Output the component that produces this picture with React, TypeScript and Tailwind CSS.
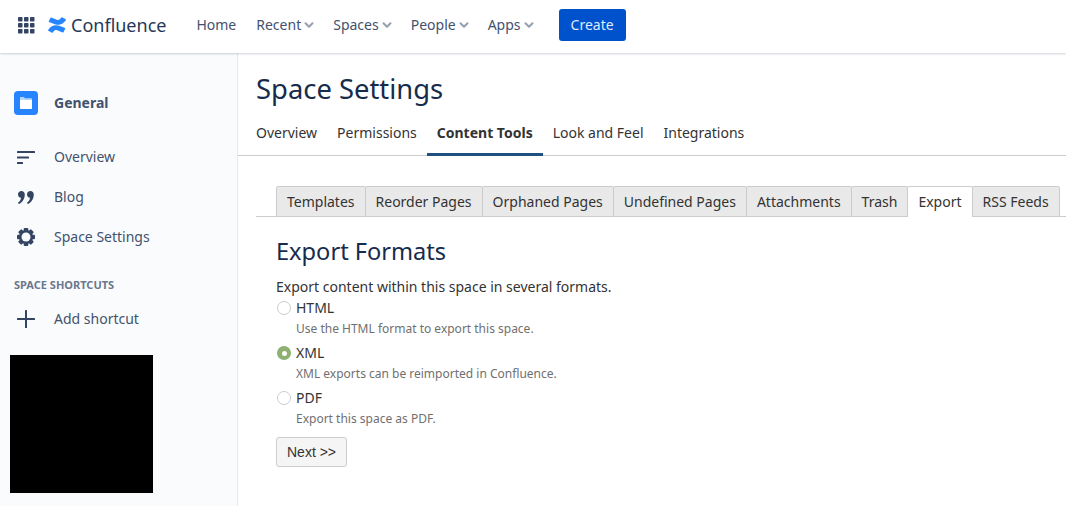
import { ChevronDown } from "lucide-react";

const NAV_ITEMS = [
  { label: "Home", menu: false },
  { label: "Recent", menu: true },
  { label: "Spaces", menu: true },
  { label: "People", menu: true },
  { label: "Apps", menu: true },
];

const SPACE_TABS = ["Overview", "Permissions", "Content Tools", "Look and Feel", "Integrations"];

const TOOL_TABS = [
  "Templates",
  "Reorder Pages",
  "Orphaned Pages",
  "Undefined Pages",
  "Attachments",
  "Trash",
  "Export",
  "RSS Feeds",
];

const FORMATS = [
  { name: "HTML", hint: "Use the HTML format to export this space.", checked: false },
  { name: "XML", hint: "XML exports can be reimported in Confluence.", checked: true },
  { name: "PDF", hint: "Export this space as PDF.", checked: false },
];

function GridIcon() {
  return (
    <svg width="17" height="17" viewBox="0 0 17 17" fill="#344563">
      {[0, 6, 12].map((y) =>
        [0, 6, 12].map((x) => <rect key={`${x}-${y}`} x={x} y={y} width="4.5" height="4.5" rx="0.8" />),
      )}
    </svg>
  );
}

// squashed a little: the mark in the header is wider than it is tall
function ConfluenceMark() {
  return (
    <svg width="18" height="16" viewBox="0 0 24 24" preserveAspectRatio="none" fill="#2684ff">
      <path d="M.87 18.257c-.248.382-.53.875-.763 1.245a.764.764 0 0 0 .255 1.04l4.965 3.054a.764.764 0 0 0 1.058-.26c.199-.332.454-.763.733-1.221 1.967-3.247 3.945-2.853 7.508-1.146l4.957 2.337a.764.764 0 0 0 1.028-.382l2.364-5.346a.764.764 0 0 0-.382-1 599.851 599.851 0 0 1-4.965-2.361C10.911 10.97 5.224 11.185.87 18.257zM23.131 5.743c.249-.405.531-.875.764-1.25a.764.764 0 0 0-.256-1.04L18.675.4a.764.764 0 0 0-1.058.26c-.195.335-.451.763-.734 1.225-1.966 3.246-3.945 2.85-7.508 1.146L4.437.7a.764.764 0 0 0-1.027.382L1.046 6.43a.764.764 0 0 0 .382 1c1.039.49 3.105 1.467 4.965 2.361 6.698 3.246 12.392 3.029 16.738-4.048z" />
    </svg>
  );
}

function FolderBadge() {
  return (
    <div className="flex h-6 w-6 items-center justify-center rounded-[4px] bg-[#2684ff]">
      <svg width="12" height="12" viewBox="0 0 12 12">
        <path d="M0 1C0 .4.400 0 1 0h3l1 1.200h6c.6 0 1 .4 1 1V3H0z" fill="#b3d4ff" />
        <path d="M0 3h12v8c0 .6-.4 1-1 1H1c-.6 0-1-.4-1-1z" fill="#ffffff" />
      </svg>
    </div>
  );
}

function OverviewIcon() {
  return (
    <svg width="18" height="13" viewBox="0 0 18 13" fill="#344563">
      <rect x="0" y="0" width="18" height="2" rx="0.5" />
      <rect x="0" y="5.500" width="12" height="2" rx="0.5" />
      <rect x="0" y="11" width="6" height="2" rx="0.5" />
    </svg>
  );
}

function QuoteIcon() {
  return (
    <svg width="16" height="13" viewBox="0 0 16 13" fill="#344563">
      <path d="M3.400 0C5.300 0 6.800 1.400 6.800 3.400 6.800 7.500 4.400 11.600.8 13L0 11.700c1.600-1 2.700-2.500 3-4.900C1.300 6.600 0 5.200 0 3.400 0 1.400 1.500 0 3.400 0z" />
      <path d="M12.400 0c1.900 0 3.400 1.400 3.400 3.400 0 4.100-2.400 8.200-6 9.600L9 11.700c1.600-1 2.700-2.500 3-4.900-1.700-.2-3-1.600-3-3.400C9 1.400 10.500 0 12.400 0z" />
    </svg>
  );
}

function GearIcon() {
  return (
    <svg width="18" height="18" viewBox="0 0 18 18" fill="#344563">
      {[0, 45, 90, 135].map((angle) => (
        <rect key={angle} x="6.700" y="0" width="4.600" height="18" rx="1" transform={`rotate(${angle} 9 9)`} />
      ))}
      <circle cx="9" cy="9" r="7" />
      <circle cx="9" cy="9" r="4.500" fill="#fafbfc" />
    </svg>
  );
}

function PlusIcon() {
  return (
    <svg width="18" height="18" viewBox="0 0 18 18" fill="#344563">
      <rect x="8" y="0" width="2" height="18" rx="0.5" />
      <rect x="0" y="8" width="18" height="2" rx="0.5" />
    </svg>
  );
}

function SideRow({ icon, label }: { icon: React.ReactNode; label: string }) {
  return (
    <div className="flex h-10 items-center">
      <div className="mr-4 flex w-6 shrink-0 items-center justify-center">{icon}</div>
      <span className="text-sm text-[#42526e]">{label}</span>
    </div>
  );
}

export default function App() {
  return (
    <div className="flex h-[506px] w-[1066px] flex-col overflow-hidden bg-white font-['Noto_Sans',sans-serif]">
      <header className="z-10 flex h-[53px] shrink-0 items-center bg-white pb-[3px] pl-[18px] shadow-[0_1px_2px_rgba(9,30,66,0.2)]">
        <GridIcon />
        <div className="ml-[13px] flex items-center gap-[5px]">
          <ConfluenceMark />
          <span className="text-[18px] leading-6 text-[#253858]">Confluence</span>
        </div>
        <nav className="ml-[30px] flex items-center gap-4">
          {NAV_ITEMS.map((item) => (
            <div key={item.label} className="flex items-center text-sm text-[#42526e]">
              {item.label}
              {item.menu ? (
                <ChevronDown className="mx-px h-[14px] w-[14px] text-[#97a0af]" strokeWidth={3.5} />
              ) : (
                <span className="w-1" />
              )}
            </div>
          ))}
        </nav>
        <button className="ml-[22px] h-8 rounded-[3px] bg-[#0052cc] px-3 text-sm text-[#deebff]">Create</button>
      </header>

      <div className="flex min-h-0 flex-1">
        <aside className="w-[238px] shrink-0 border-r border-[#e6e8ec] bg-[#fafbfc] pl-[14px] pt-[38px]">
          <div className="flex h-6 items-center">
            <FolderBadge />
            <span className="ml-4 text-sm font-bold text-[#42526e]">General</span>
          </div>
          <div className="mt-[22px]">
            <SideRow icon={<OverviewIcon />} label="Overview" />
            <SideRow icon={<QuoteIcon />} label="Blog" />
            <SideRow icon={<GearIcon />} label="Space Settings" />
          </div>
          <div className="mt-5 text-[11px] font-bold leading-4 text-[#6b778c]">SPACE SHORTCUTS</div>
          <div className="mt-[6px]">
            <SideRow icon={<PlusIcon />} label="Add shortcut" />
          </div>
          <div className="-ml-1 mt-4 h-[138px] w-[143px] bg-black" />
        </aside>

        <main className="min-w-0 flex-1">
          <h1 className="ml-[18px] mt-[16px] text-[27.4px] leading-10 text-[#172b4d]">Space Settings</h1>
          <div className="flex h-[47px] border-b border-[#cccccc] pl-[8px]">
            {SPACE_TABS.map((tab) => (
              <div
                key={tab}
                className={
                  tab === "Content Tools"
                    ? "-mb-px flex h-[47px] items-center border-b-[3px] border-[#205081] px-[10px] pt-1 text-sm font-bold text-[#333333]"
                    : "-mb-px flex h-[47px] items-center border-b-[3px] border-transparent px-[10px] pt-1 text-sm text-[#333333]"
                }
              >
                {tab}
              </div>
            ))}
          </div>

          <div className="ml-[18px] mt-[30px] flex h-[31px] border-b border-[#cccccc] pl-5">
            {TOOL_TABS.map((tab) => (
              <div
                key={tab}
                className={
                  tab === "Export"
                    ? "-ml-px flex h-[31px] items-center rounded-t-[2px] border border-b-0 border-[#cccccc] bg-white px-[10px] text-sm text-[#333333] first:ml-0"
                    : "-ml-px flex h-[31px] items-center rounded-t-[2px] border border-[#cccccc] bg-[#e9e9e9] px-[10px] text-sm text-[#333333] first:ml-0"
                }
              >
                {tab}
              </div>
            ))}
          </div>

          <div className="pl-[38px]">
            <h2 className="mt-[18px] text-[23.6px] leading-8 text-[#172b4d]">Export Formats</h2>
            <p className="mt-[10px] text-sm leading-5 text-[#333333]">Export content within this space in several formats.</p>
            <div className="pt-px">
              {FORMATS.map((format) => (
                <div key={format.name} className="h-[45px]">
                  <div className="flex h-5 items-center">
                    {format.checked ? (
                      <span className="ml-px flex h-[14px] w-[14px] items-center justify-center rounded-full bg-[#8eb071]">
                        <span className="h-[5px] w-[5px] rounded-full bg-white" />
                      </span>
                    ) : (
                      <span className="ml-px h-[14px] w-[14px] rounded-full border border-[#cccccc] bg-white" />
                    )}
                    <span className="ml-[5px] text-sm text-[#333333]">{format.name}</span>
                  </div>
                  <div className="ml-5 mt-[2px] text-xs leading-[18px] text-[#707070]">{format.hint}</div>
                </div>
              ))}
            </div>
            <button className="mt-1 h-[30px] rounded-[3px] border border-[#cccccc] bg-[#f5f5f5] px-[10px] font-['Liberation_Sans',sans-serif] text-sm text-[#333333]">
              Next &gt;&gt;
            </button>
          </div>
        </main>
      </div>
    </div>
  );
}
